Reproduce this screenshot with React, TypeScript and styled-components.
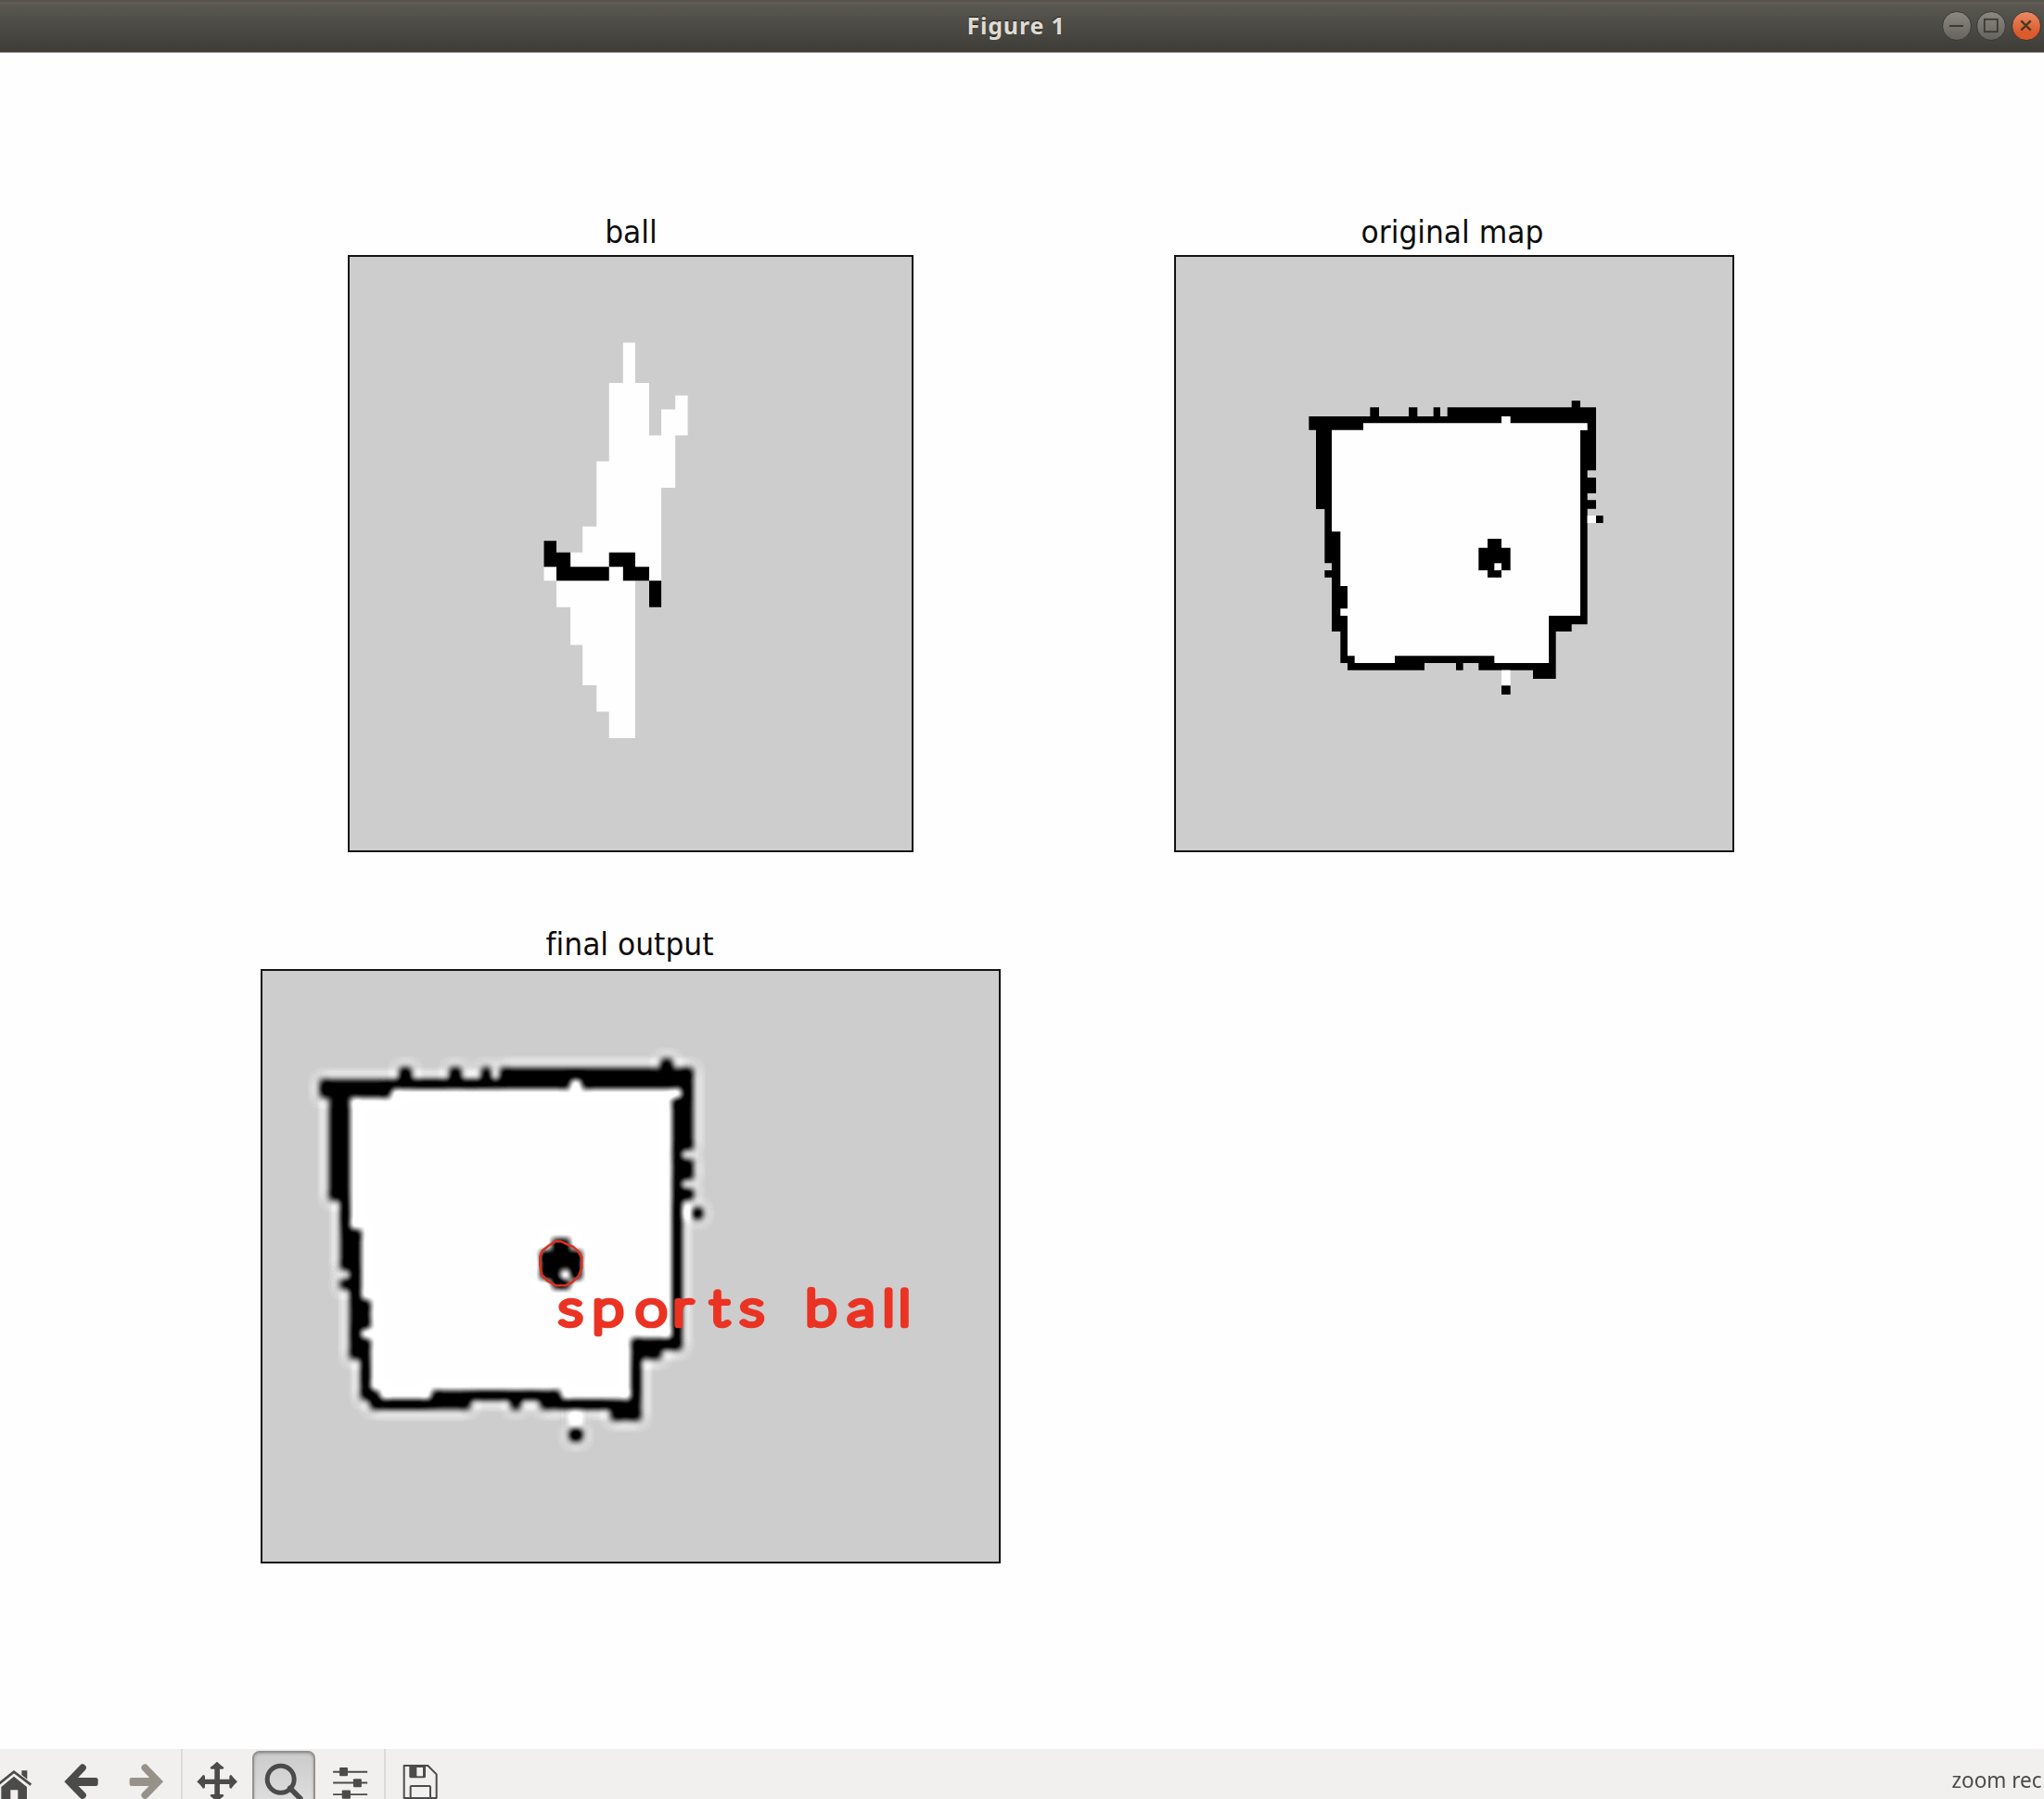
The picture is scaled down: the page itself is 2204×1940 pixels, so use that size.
import React from "react";
import styled, { createGlobalStyle } from "styled-components";

const GlobalStyle = createGlobalStyle`
  html, body {
    margin: 0;
    padding: 0;
    background: #fefefe;
  }
`;

const Window = styled.div`
  display: flex;
  flex-direction: column;
  width: 2204px;
  height: 1940px;
  overflow: hidden;
  background: #fefefe;
`;

const TitleBar = styled.header`
  display: grid;
  grid-template-columns: 1fr auto 1fr;
  align-items: center;
  flex: none;
  box-sizing: border-box;
  height: 57px;
  padding-right: 3px;
  border-bottom: 1px solid #8f8d87;
  background: linear-gradient(#55534b 0, #55534b 2px, #64625a 3px, #595750 5px, #3d3c37 56px);
`;

const WindowTitle = styled.h1`
  grid-column: 2;
  margin: 0 10px 0 0;
  padding-bottom: 2px;
  color: #dfdbd2;
  font: 700 25px/54px "Noto Sans", "Open Sans", sans-serif;
  letter-spacing: 0.8px;
  text-shadow: 0 -1px 1px rgba(0, 0, 0, 0.6);
`;

const WindowButtons = styled.div`
  display: flex;
  justify-content: flex-end;
  gap: 5.6px;
`;

const WindowButton = styled.span<{ $close?: boolean }>`
  box-sizing: border-box;
  width: 32px;
  height: 32px;
  border: 1.5px solid #3a3934;
  border-radius: 50%;
  background: ${(p) =>
    p.$close ? "linear-gradient(#ea8a66, #dc5a2c 75%)" : "linear-gradient(#8a8881, #65635c)"};

  svg {
    display: block;
    width: 29px;
    height: 29px;
  }
`;

const Canvas = styled.main`
  display: flex;
  flex-direction: column;
  gap: 76px;
  flex: 1;
  min-height: 0;
  padding-top: 168px;
`;

const PlotRow = styled.div<{ $inset: number }>`
  display: flex;
  gap: 281px;
  padding-left: ${(p) => p.$inset}px;
`;

const Plot = styled.figure<{ $width: number }>`
  width: ${(p) => p.$width}px;
  margin: 0;
`;

const PlotTitle = styled.figcaption<{ $line: number; $shift: number }>`
  height: 50px;
  color: #0c0c0c;
  font: 33px / ${(p) => p.$line}px "DejaVu Sans", sans-serif;
  font-variant-ligatures: none;
  text-align: center;
  white-space: nowrap;
  transform: translateX(${(p) => p.$shift}px) scaleX(0.95);
`;

const Axes = styled.div<{ $height: number }>`
  box-sizing: border-box;
  height: ${(p) => p.$height}px;
  border: 2px solid #141414;
  background: #cdcdcd;

  svg {
    display: block;
    width: 100%;
    height: 100%;
  }
`;

const Label = styled.text`
  fill: #eb3323;
  stroke: #eb3323;
  stroke-width: 7.4px;
  stroke-linejoin: round;
  vector-effect: non-scaling-stroke;
  font: 100 51px Lato, sans-serif;
`;

const Toolbar = styled.footer`
  display: flex;
  flex: none;
  height: 54px;
  overflow: hidden;
  background: #f1f0ee;
`;

const Tool = styled.span<{ $width: number; $active?: boolean }>`
  flex: none;
  box-sizing: border-box;
  width: ${(p) => p.$width}px;
  height: ${(p) => (p.$active ? 64 : 54)}px;
  ${(p) =>
    p.$active &&
    `
    margin-top: 2px;
    border: 2px solid #929290;
    border-radius: 8px;
    background: linear-gradient(#cbcbcb, #e0e0e0 60px);
    box-shadow: inset 0 1px 3px rgba(0, 0, 0, 0.25);
  `}

  svg {
    display: block;
    width: ${(p) => p.$width}px;
    height: 54px;
    ${(p) => p.$active && "margin: -4px 0 0 -2px;"}
  }
`;

const Separator = styled.i<{ $after: number }>`
  flex: none;
  width: 2px;
  height: 54px;
  margin-right: ${(p) => p.$after}px;
  background: #dcdbd8;
`;

const Status = styled.span`
  margin-left: auto;
  padding-right: 3px;
  color: #4b4b4b;
  font: 24px/66px "Noto Sans", "Open Sans", sans-serif;
  white-space: nowrap;
  transform: scaleX(0.94);
  transform-origin: right;
`;

const INK = "#4b4b4b";

const WALLS =
  "64,87 262,87 262,58 291,58 291,87 387,87 387,58 415,58 415,87 467,87 467,58 489,58 489,87 512,87 512,58 914,58 914,36 942,36 942,58 993,58 993,262 965,262 965,285 993,285 993,336 965,336 965,358 993,358 993,386 965,386 965,760 914,760 914,783 863,783 863,936 789,936 789,908 613,908 613,885 563,885 563,908 540,908 540,885 438,885 438,908 189,908 189,885 166,885 166,783 138,783 138,608 115,608 115,585 138,585 138,562 115,562 115,387 87,387 87,131 64,131";
const ROOM =
  "138,131 240,131 240,109 687,109 687,87 716,87 716,109 965,109 965,132 942,132 942,732 840,732 840,885 664,885 664,862 342,862 342,885 212,885 212,862 189,862 189,732 166,732 166,709 189,709 189,636 166,636 166,460 138,460";

const OccupancyMap = () => (
  <>
    <polygon points={WALLS} fill="#000" />
    <polygon points={ROOM} fill="#fefefe" />
    <rect x="965" y="408" width="28" height="24" fill="#fefefe" />
    <rect x="993" y="408" width="23" height="24" fill="#000" />
    <rect x="687" y="908" width="29" height="50" fill="#fefefe" />
    <rect x="687" y="958" width="29" height="29" fill="#000" />
    <polygon points="642,483 687,483 687,512 716,512 716,585 687,585 687,608 642,608 642,585 613,585 613,512 642,512" fill="#000" />
    <rect x="664" y="562" width="23" height="23" fill="#fefefe" />
  </>
);

const BallPlot = () => (
  <svg viewBox="377 277 606 640">
    <g transform="translate(360 220) scale(0.40816 0.4528)">
      <polygon
        fill="#fefefe"
        points="764,330 796,330 796,426 833,426 833,551 865,551 865,489 902,489 902,456 935,456 935,551 902,551 902,676 865,676 865,897 796,897 796,1272 727,1272 727,1209 694,1209 694,1146 657,1146 657,1050 625,1050 625,960 588,960 588,897 555,897 555,864 588,864 625,864 625,830 657,830 657,768 694,768 694,613 727,613 727,426 764,426"
      />
      <polygon
        fill="#000"
        points="555,802 588,802 588,830 625,830 625,864 727,864 727,830 796,830 796,864 833,864 833,897 865,897 865,960 833,960 833,897 764,897 764,864 727,864 727,897 588,897 588,864 555,864"
      />
    </g>
  </svg>
);

const OriginalPlot = () => (
  <svg viewBox="1268 277 600 640">
    <g transform="translate(1390 420) scale(0.33333)">
      <OccupancyMap />
    </g>
  </svg>
);

const FinalPlot = () => (
  <svg viewBox="283 1047 794 637">
    <filter
      id="resample"
      filterUnits="userSpaceOnUse"
      x="240"
      y="1000"
      width="880"
      height="730"
      colorInterpolationFilters="sRGB"
    >
      <feGaussianBlur in="SourceGraphic" stdDeviation="4.6" result="near" />
      <feGaussianBlur in="SourceGraphic" stdDeviation="6" result="far" />
      <feComposite in="near" in2="far" operator="arithmetic" k1="0" k2="4.8" k3="-3.8" k4="0" />
    </filter>
    <g filter="url(#resample)">
      <rect x="200" y="960" width="960" height="810" fill="#cdcdcd" />
      <g transform="translate(317.7 1127) scale(0.4323 0.432)">
        <OccupancyMap />
      </g>
    </g>
    <path
      d="M604.7 1338.6L612 1342L618 1344.5L624 1350L627.3 1356V1367.5L624 1376L616 1383.5L609.5 1386.3H599.5L590 1381L584 1374.5L582.3 1364V1355.5L585 1348.5L592 1343L599 1338.6Z"
      fill="none"
      stroke="#d8301f"
      strokeWidth="2.6"
      strokeLinejoin="round"
    />
    <Label
      transform="scale(1.2 1)"
      y="1428.6"
      x="502.1 532.6 571.3 604.8 638.1 665.1 700 723.9 761.7 793.1 807.6"
    >
      sports ball
    </Label>
  </svg>
);

const HomeIcon = () => (
  <svg viewBox="0 48 156 162" fill={INK}>
    <path d="M70 118H88V146L70 132Z" />
    <path d="M-6 163L45 122L100 164" fill="none" stroke={INK} strokeWidth="8" />
    <path d="M4 171L45 137L87 171V212H58V181H34V212H4Z" />
  </svg>
);

const ArrowIcon = ({ forward }: { forward?: boolean }) => (
  <svg viewBox={forward ? "372 48 213 162" : "156 48 216 162"}>
    <g transform={forward ? "translate(736 0) scale(-1 1)" : undefined} fill={forward ? "#969289" : INK}>
      <path
        d="M267 109L224 154L267 198"
        fill="none"
        stroke={forward ? "#969289" : INK}
        strokeWidth="23"
        strokeLinecap="round"
      />
      <rect x="225" y="141" width="92" height="27" rx="7" />
    </g>
  </svg>
);

const PanIcon = () => (
  <svg viewBox="591 48 225 162" fill={INK}>
    <path d="M694 104H711V146H745V162H711V206H694V162H658V146H694Z" />
    <path d="M702 89Q712 99 724 108Q724 113 720 113H684Q680 113 680 108Q692 99 702 89Z" />
    <path d="M702 219Q712 209 724 200Q724 195 720 195H684Q680 195 680 200Q692 209 702 219Z" />
    <path d="M637 154Q648 144 657 132Q663 132 663 137V171Q663 176 657 176Q648 164 637 154Z" />
    <path d="M768 154Q757 144 748 132Q742 132 742 137V171Q742 176 748 176Q757 164 768 154Z" />
  </svg>
);

const ZoomIcon = () => (
  <svg viewBox="816 48 203 162" fill="none" stroke={INK}>
    <circle cx="908" cy="146" r="43.5" strokeWidth="15" />
    <path d="M938 175L971 208" strokeWidth="17" strokeLinecap="round" />
  </svg>
);

const SlidersIcon = () => (
  <svg viewBox="1018 48 225 162" fill={INK}>
    <path d="M1076 122H1188M1076 158H1188M1076 196H1188" stroke={INK} strokeWidth="6" />
    <rect x="1097" y="108" width="27" height="28" rx="3" />
    <rect x="1142" y="145" width="27" height="27" rx="3" />
    <rect x="1105" y="182" width="28" height="28" rx="3" />
  </svg>
);

const SaveIcon = () => (
  <svg viewBox="1250 48 225 162" fill="none" stroke={INK} strokeWidth="6">
    <path d="M1306 102H1383L1411 130V207H1306Z" strokeLinejoin="round" />
    <path d="M1323 102H1376V137Q1376 142 1371 142H1328Q1323 142 1323 137Z" fill={INK} stroke="none" />
    <rect x="1347" y="108" width="20" height="28" fill="#f1f0ee" stroke="none" />
    <path d="M1327 207V171Q1327 168 1330 168H1388Q1391 168 1391 171V207" />
  </svg>
);

export default function App() {
  return (
    <>
      <GlobalStyle />
      <Window>
        <TitleBar>
          <WindowTitle>Figure 1</WindowTitle>
          <WindowButtons>
            <WindowButton>
              <svg viewBox="0 0 29 29">
                <path d="M7 15H22" stroke="#3a3934" strokeWidth="2" />
              </svg>
            </WindowButton>
            <WindowButton>
              <svg viewBox="0 0 29 29">
                <rect x="7.8" y="7.8" width="14" height="13.4" fill="none" stroke="#3a3934" strokeWidth="1.8" />
              </svg>
            </WindowButton>
            <WindowButton $close>
              <svg viewBox="0 0 29 29">
                <path d="M9.3 9.3L19.7 19.7M19.7 9.3L9.3 19.7" stroke="#4a3a24" strokeWidth="2.4" />
              </svg>
            </WindowButton>
          </WindowButtons>
        </TitleBar>

        <Canvas>
          <PlotRow $inset={375}>
            <Plot $width={610}>
              <PlotTitle $line={51} $shift={0.5}>ball</PlotTitle>
              <Axes $height={644}>
                <BallPlot />
              </Axes>
            </Plot>
            <Plot $width={604}>
              <PlotTitle $line={51} $shift={-2}>original map</PlotTitle>
              <Axes $height={644}>
                <OriginalPlot />
              </Axes>
            </Plot>
          </PlotRow>
          <PlotRow $inset={281}>
            <Plot $width={798}>
              <PlotTitle $line={47} $shift={-1}>final output</PlotTitle>
              <Axes $height={641}>
                <FinalPlot />
              </Axes>
            </Plot>
          </PlotRow>
        </Canvas>

        <Toolbar>
          <Tool $width={52}><HomeIcon /></Tool>
          <Tool $width={72}><ArrowIcon /></Tool>
          <Tool $width={71}><ArrowIcon forward /></Tool>
          <Separator $after={0} />
          <Tool $width={75}><PanIcon /></Tool>
          <Tool $width={67.7} $active><ZoomIcon /></Tool>
          <Tool $width={74.3}><SlidersIcon /></Tool>
          <Separator $after={1} />
          <Tool $width={75}><SaveIcon /></Tool>
          <Status>zoom rec</Status>
        </Toolbar>
      </Window>
    </>
  );
}
